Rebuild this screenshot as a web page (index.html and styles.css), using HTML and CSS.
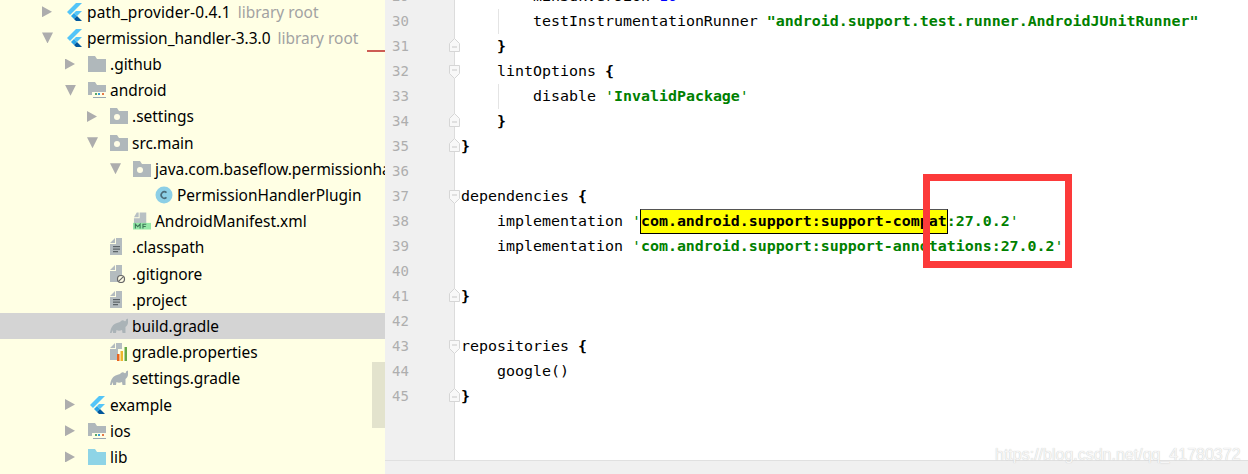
FILE: index.html
```html
<!DOCTYPE html>
<html lang="en">
<head>
<meta charset="utf-8">
<title>build.gradle</title>
<link rel="stylesheet" href="styles.css">
</head>
<body>
<svg class="defs" width="0" height="0" aria-hidden="true">
  <defs>
    <symbol id="flutter" viewBox="0 0 18 18">
      <path fill="#54c5f8" d="M11 0h6L5 12 2 9z"/>
      <path fill="#54c5f8" d="M11 8h6l-5 5-3-3z"/>
      <path fill="#29a5e8" d="M6 13l3-3 3 3-3 3z"/>
      <path fill="#01579b" d="M9 16l3-3 5 5h-6z"/>
    </symbol>
    <symbol id="folder" viewBox="0 0 18 18">
      <path fill="#b0b8bb" d="M0 1h7l2 3h9v13H0z"/>
    </symbol>
    <symbol id="module" viewBox="0 0 18 18">
      <path fill="#b0b8bb" d="M0 1h7l2 3h9v10H0z"/>
      <path fill="#fffde6" d="M4 11h14v4H4z"/>
      <path fill="#59a869" d="M7 12h2v2H7z"/>
      <path fill="#389fd6" d="M10 12h2v2h-2z"/>
      <path fill="#e57a47" d="M14 12h2v2h-2z"/>
      <path fill="#9aa7b0" d="M5 16h13v1H5z"/>
    </symbol>
    <symbol id="source" viewBox="0 0 18 18">
      <path fill="#b0b8bb" d="M0 1h7l2 3h9v13H0z"/>
      <circle cx="7" cy="10" r="3" fill="#fffde6"/>
    </symbol>
    <symbol id="lib" viewBox="0 0 18 18">
      <path fill="#8ed4e6" d="M0 1h7l2 3h9v13H0z"/>
    </symbol>
    <symbol id="class" viewBox="0 0 18 18">
      <circle cx="9" cy="9" r="8.5" fill="#8ccfe6"/>
      <path fill="none" stroke="#4a6a78" stroke-width="1.6" d="M11.5 6.6A3.2 3.2 0 1 0 11.5 11.4"/>
    </symbol>
    <symbol id="manifest" viewBox="0 0 19 18">
      <path fill="#b8c0c3" d="M4 0h2v5H1zM7 0h7v11H1V6h6z"/>
      <path fill="#96e8a8" d="M0 11h19v7H0z"/>
      <path fill="none" stroke="#3d7a58" stroke-width="1.2" d="M2.5 17v-4.6L5 15l2.500-2.600V17M10.500 17v-4.600H14M10.500 14.800h3"/>
    </symbol>
    <symbol id="text" viewBox="0 0 18 18">
      <path fill="#b4bcbf" d="M6 0h6v17H0V6h6zM5 0v5H0z"/>
      <path fill="#5c6468" d="M3 8h7v1.200H3zM3 10.500h7v1.200H3zM3 13h5v1.200H3z"/>
    </symbol>
    <symbol id="ignored" viewBox="0 0 18 18">
      <path fill="#b4bcbf" d="M6 0h6v17H0V6h6zM5 0v5H0z"/>
      <circle cx="11" cy="14" r="3.500" fill="#fffde6" stroke="#666" stroke-width="1.200"/>
      <path stroke="#666" stroke-width="1.200" d="M8.800 16.200l4.400-4.400"/>
    </symbol>
    <symbol id="gradle" viewBox="0 0 18 18">
      <path fill="#aab3b7" d="M0 16C1 10 3 7 7 6C9 5.500 10 5 11 4C12 3 13.500 3 14.500 4C15.500 4.500 16 4 16 2.500L18 1.500V5.500C18 7.500 16.500 9 15.500 10V16H12.500L12 13C10 14 8 14 6.500 13L6 16H3V13L1.500 16Z"/>
    </symbol>
    <symbol id="props" viewBox="0 0 18 18">
      <path fill="#b4bcbf" d="M6 0h6v6H8v11H0V6h6zM5 0v5H0z"/>
      <path fill="#e8641e" d="M7 11h2.500v7H7z"/>
      <path fill="#edb52c" d="M10.500 8H13v10h-2.500z"/>
      <path fill="#66a845" d="M14.500 4H17v14h-2.500z"/>
    </symbol>
    <symbol id="fold-start" viewBox="0 0 11 14">
      <path fill="#f8f8f8" stroke="#d6d6d6" d="M.5.500h10v8l-5 5-5-5z"/>
      <path stroke="#c8c8c8" d="M3 5h5"/>
    </symbol>
    <symbol id="fold-end" viewBox="0 0 11 14">
      <path fill="#f8f8f8" stroke="#d6d6d6" d="M.5 13.500h10v-8l-5-5-5 5z"/>
      <path stroke="#c8c8c8" d="M3 9h5"/>
    </symbol>
  </defs>
</svg>

<div class="window">
  <aside class="tree">
    <div class="rows">
      <div class="row l0"><span class="arrow right"></span><svg class="icon"><use href="#flutter"/></svg><span class="name wide">path_provider-0.4.1</span><span class="hint">library root</span></div>
      <div class="row l0"><span class="arrow down"></span><svg class="icon"><use href="#flutter"/></svg><span class="name">permission_handler-3.3.0</span><span class="hint">library root</span></div>
      <div class="row l1"><span class="arrow right"></span><svg class="icon"><use href="#folder"/></svg><span class="name">.github</span></div>
      <div class="row l1"><span class="arrow down"></span><svg class="icon"><use href="#module"/></svg><span class="name">android</span></div>
      <div class="row l2"><span class="arrow right"></span><svg class="icon"><use href="#source"/></svg><span class="name">.settings</span></div>
      <div class="row l2"><span class="arrow down"></span><svg class="icon"><use href="#source"/></svg><span class="name">src.main</span></div>
      <div class="row l3"><span class="arrow down"></span><svg class="icon"><use href="#source"/></svg><span class="name">java.com.baseflow.permissionhandler</span></div>
      <div class="row l4"><span class="arrow"></span><svg class="icon"><use href="#class"/></svg><span class="name">PermissionHandlerPlugin</span></div>
      <div class="row l3"><span class="arrow"></span><svg class="icon"><use href="#manifest"/></svg><span class="name">AndroidManifest.xml</span></div>
      <div class="row l2"><span class="arrow"></span><svg class="icon"><use href="#text"/></svg><span class="name">.classpath</span></div>
      <div class="row l2"><span class="arrow"></span><svg class="icon"><use href="#ignored"/></svg><span class="name">.gitignore</span></div>
      <div class="row l2"><span class="arrow"></span><svg class="icon"><use href="#text"/></svg><span class="name">.project</span></div>
      <div class="row l2 selected"><span class="arrow"></span><svg class="icon"><use href="#gradle"/></svg><span class="name">build.gradle</span></div>
      <div class="row l2"><span class="arrow"></span><svg class="icon"><use href="#props"/></svg><span class="name">gradle.properties</span></div>
      <div class="row l2"><span class="arrow"></span><svg class="icon"><use href="#gradle"/></svg><span class="name">settings.gradle</span></div>
      <div class="row l1"><span class="arrow right"></span><svg class="icon"><use href="#flutter"/></svg><span class="name">example</span></div>
      <div class="row l1"><span class="arrow right"></span><svg class="icon"><use href="#module"/></svg><span class="name">ios</span></div>
      <div class="row l1"><span class="arrow right"></span><svg class="icon"><use href="#lib"/></svg><span class="name">lib</span></div>
    </div>
    <span class="error-mark"></span>
    <span class="thumb"></span>
  </aside>

  <main class="editor">
    <div class="panes">
      <div class="gutter">
        <div class="ln">29</div>
        <div class="ln">30</div>
        <div class="ln">31<svg class="fold end"><use href="#fold-end"/></svg></div>
        <div class="ln">32<svg class="fold"><use href="#fold-start"/></svg></div>
        <div class="ln">33</div>
        <div class="ln">34<svg class="fold end"><use href="#fold-end"/></svg></div>
        <div class="ln">35<svg class="fold end"><use href="#fold-end"/></svg></div>
        <div class="ln">36</div>
        <div class="ln">37<svg class="fold"><use href="#fold-start"/></svg></div>
        <div class="ln">38</div>
        <div class="ln">39</div>
        <div class="ln">40</div>
        <div class="ln">41<svg class="fold end"><use href="#fold-end"/></svg></div>
        <div class="ln">42</div>
        <div class="ln">43<svg class="fold"><use href="#fold-start"/></svg></div>
        <div class="ln">44</div>
        <div class="ln">45<svg class="fold end"><use href="#fold-end"/></svg></div>
      </div>
      <div class="code">
        <div class="cl i2">minSdkVersion <span class="num">16</span></div>
        <div class="cl i2 guide">testInstrumentationRunner <b class="str">"android.support.test.runner.AndroidJUnitRunner"</b></div>
        <div class="cl i1"><b>}</b></div>
        <div class="cl i1">lintOptions <b>{</b></div>
        <div class="cl i2 guide">disable <span class="str">'<b>InvalidPackage</b>'</span></div>
        <div class="cl i1"><b>}</b></div>
        <div class="cl"><b>}</b></div>
        <div class="cl"></div>
        <div class="cl">dependencies <b>{</b></div>
        <div class="cl i1">implementation <span class="str">'</span><b class="match">com.android.support:support-compat</b><b class="str">:27.0.2</b><span class="str">'</span></div>
        <div class="cl i1">implementation <span class="str">'<b>com.android.support:support-annotations:27.0.2</b>'</span></div>
        <div class="cl"></div>
        <div class="cl"><b>}</b></div>
        <div class="cl"></div>
        <div class="cl">repositories <b>{</b></div>
        <div class="cl i1">google()</div>
        <div class="cl"><b>}</b></div>
      </div>
    </div>
    <div class="statusbar"></div>
  </main>
</div>

<div class="red-box"></div>
<div class="watermark">https://blog.csdn.net/qq_41780372</div>
</body>
</html>
```

FILE: styles.css
```css
* { box-sizing: border-box; }
html, body {
  margin: 0;
  padding: 0;
  width: 1248px;
  height: 474px;
  overflow: hidden;
  background: #fff;
}
.defs { position: absolute; }

.window {
  display: flex;
  width: 1248px;
  height: 474px;
}

/* project tree */
.tree {
  position: relative;
  flex: 0 0 385px;
  height: 474px;
  overflow: hidden;
  background: #ffffe4;
  font-family: "Noto Sans", sans-serif;
  font-size: 15.45px;
  color: #000;
}
.rows { margin-top: -1.4px; }
.row {
  display: flex;
  align-items: center;
  height: 26.2px;
  white-space: nowrap;
}
.row.selected { background: #d4d4d4; }
.l0 { padding-left: 42px; }
.l1 { padding-left: 65px; }
.l2 { padding-left: 87px; }
.l3 { padding-left: 110px; }
.l4 { padding-left: 132px; }
.arrow {
  flex: 0 0 23px;
  width: 23px;
  height: 11px;
}
.arrow.right {
  background: #adadad;
  clip-path: polygon(0 0, 10px 50%, 0 100%);
}
.arrow.down {
  background: #adadad;
  clip-path: polygon(0 0, 11px 0, 5.5px 100%);
}
.icon {
  flex: 0 0 18px;
  width: 18px;
  height: 18px;
  margin-right: 4px;
}
.name.wide { letter-spacing: 0.15px; }
.hint {
  margin-left: 7px;
  color: #a2a2a2;
}
.error-mark {
  position: absolute;
  left: 367px;
  top: 50px;
  width: 18px;
  height: 2px;
  background: #cd5c54;
}
.thumb {
  position: absolute;
  left: 372px;
  top: 362px;
  width: 13px;
  height: 66px;
  background: #e3e3cd;
}

/* editor */
.editor {
  flex: 1;
  display: flex;
  flex-direction: column;
  min-width: 0;
  height: 474px;
}
.panes {
  flex: 0 0 460px;
  display: flex;
  overflow: hidden;
}
.statusbar {
  flex: 1;
  background: #f0f0f0;
  border-top: 1px solid #e0e0e0;
}
.gutter {
  flex: 0 0 70px;
  background: #f0f0f0;
  border-right: 1px solid #dcdcdc;
  font-family: "DejaVu Sans Mono", monospace;
  font-size: 14px;
  color: #aeaeae;
}
.ln {
  position: relative;
  height: 25px;
  line-height: 25px;
  padding-left: 7px;
}
.ln:first-child, .cl:first-child { margin-top: -16px; }
.fold {
  position: absolute;
  left: 64px;
  top: 6px;
  width: 11px;
  height: 14px;
  z-index: 1;
}
.fold.end { top: 4px; }
.code {
  flex: 1;
  padding-left: 6px;
  background: #fff;
  font-family: "DejaVu Sans Mono", monospace;
  font-size: 14.95px;
  color: #000;
}
.cl {
  position: relative;
  height: 25px;
  line-height: 25px;
  white-space: pre;
}
.cl.i1 { padding-left: 36px; }
.cl.i2 { padding-left: 72px; }
.cl.guide::before {
  content: "";
  position: absolute;
  left: 37px;
  top: 0;
  bottom: 0;
  width: 1px;
  background: #e4e4e4;
}
.str { color: #008000; }
.num { color: #0000ff; }
.match {
  display: inline-block;
  height: 25px;
  line-height: 23px;
  background: #ffff00;
  border: 1px solid #000;
  border-top-color: #555;
  margin: 0 -1px;
}

/* annotation over the screenshot */
.red-box {
  position: absolute;
  left: 923px;
  top: 174px;
  width: 149px;
  height: 94px;
  border: 7px solid #fc3a3a;
}
.watermark {
  position: absolute;
  left: 995px;
  top: 446px;
  font-family: "Liberation Sans", sans-serif;
  font-size: 16px;
  color: #f6f6f6;
  text-shadow: 0 0 1px #bdbdbd;
  white-space: nowrap;
}
```
